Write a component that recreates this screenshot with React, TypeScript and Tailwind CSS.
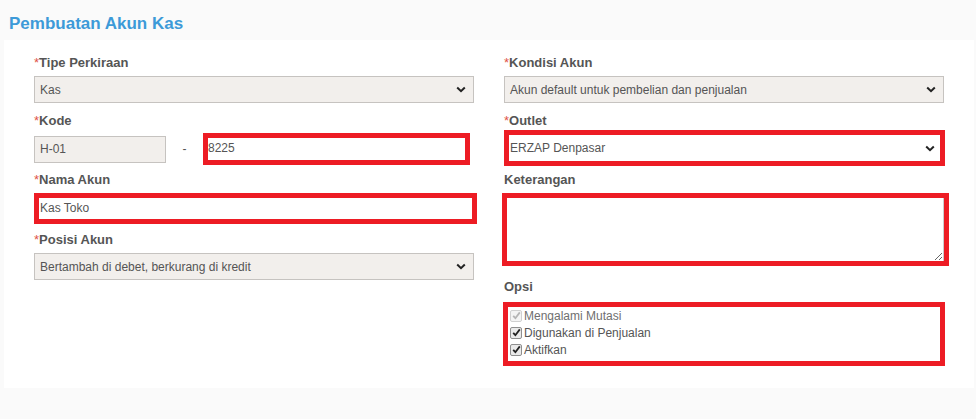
import type { ReactNode } from "react";

const font = { fontFamily: '"Liberation Sans", Arial, sans-serif' };

function Label({ children, required }: { children: ReactNode; required?: boolean }) {
  return (
    <div className="h-[18px] text-[13px] leading-[18px] font-bold text-[#555]">
      {required && <span className="font-normal text-[#e0534a]">*</span>}
      {children}
    </div>
  );
}

function Chevron() {
  return (
    <svg width="10" height="7" viewBox="0 0 10 7" className="shrink-0">
      <path d="M1.2 1.5 L5 5.2 L8.8 1.5" fill="none" stroke="#222" strokeWidth="2" />
    </svg>
  );
}

function Select({ value, className = "" }: { value: string; className?: string }) {
  return (
    <div
      className={`flex h-[27px] items-center justify-between border border-[#c6c3c0] bg-[#f2efec] pr-[7px] pl-[5px] text-[12px] text-[#555] ${className}`}
    >
      <span>{value}</span>
      <Chevron />
    </div>
  );
}

function Check({ label, disabled }: { label: string; disabled?: boolean }) {
  return (
    <div className="flex h-[17px] items-center gap-[2px] text-[12px] text-[#555]">
      <span
        className={`flex h-[12px] w-[12px] items-center justify-center rounded-[2px] border ${
          disabled ? "border-[#d0d0d0] bg-[#f4f4f4]" : "border-[#8f8f8f] bg-[#eaeaea]"
        }`}
      >
        <svg width="9" height="9" viewBox="0 0 9 9">
          <path
            d="M1.2 4.8 L3.4 7.2 L7.8 1.4"
            fill="none"
            stroke={disabled ? "#b5b5b5" : "#222"}
            strokeWidth="1.8"
          />
        </svg>
      </span>
      <span className={disabled ? "text-[#6f6f6f]" : ""}>{label}</span>
    </div>
  );
}

export default function App() {
  return (
    <div className="min-h-[419px] bg-[#fafafa]" style={font}>
      <h1 className="h-[40px] pt-[14px] pl-[9px] text-[17px] leading-[20px] font-bold text-[#3d9ad8]">
        Pembuatan Akun Kas
      </h1>

      <div className="mr-[2px] ml-[4px] grid h-[348px] grid-cols-[440px_440px] gap-x-[30px] bg-white pt-[14px] pl-[30px]">
        {/* left column */}
        <div className="flex flex-col">
          <Label required>Tipe Perkiraan</Label>
          <Select value="Kas" className="mt-[4px]" />

          <div className="mt-[9px]">
            <Label required>Kode</Label>
          </div>
          <div className="mt-[3px] flex h-[32px] items-center">
            <div className="flex h-[27px] w-[132px] items-center border border-[#c6c3c0] bg-[#f2efec] pl-[5px] text-[12px] text-[#555]">
              H-01
            </div>
            <div className="w-[37px] text-center text-[12px] text-[#555]">-</div>
            <div className="flex h-[32px] w-[267px] items-center border-[5px] border-[#ed1c24] bg-white pb-[2px] text-[12px] text-[#555]">
              8225
            </div>
          </div>

          <div className="mt-[6px]">
            <Label required>Nama Akun</Label>
          </div>
          <div className="mt-[4px] flex h-[31px] w-[443px] items-center border-[5px] border-[#ed1c24] bg-white pb-[1px] pl-[1px] text-[12px] text-[#555]">
            Kas Toko
          </div>

          <div className="mt-[7px]">
            <Label required>Posisi Akun</Label>
          </div>
          <Select value="Bertambah di debet, berkurang di kredit" className="mt-[4px]" />
        </div>

        {/* right column */}
        <div className="flex flex-col">
          <Label required>Kondisi Akun</Label>
          <Select value="Akun default untuk pembelian dan penjualan" className="mt-[4px]" />

          <div className="mt-[9px]">
            <Label required>Outlet</Label>
          </div>
          <div className="flex h-[36px] w-[441px] items-center justify-between border-[5px] border-[#ed1c24] bg-white pr-[5px] pl-[1px] text-[12px] text-[#555]">
            <span>ERZAP Denpasar</span>
            <Chevron />
          </div>

          <div className="mt-[5px]">
            <Label>Keterangan</Label>
          </div>
          <div className="mt-[4px] -ml-[2px] h-[73px] w-[447px] border-[5px] border-[#ed1c24] bg-white">
            <textarea className="block h-full w-full resize-y border-r border-[#ccc] text-[12px] text-[#555] outline-none" />
          </div>

          <div className="mt-[12px]">
            <Label>Opsi</Label>
          </div>
          <div className="mt-[6px] -ml-[1px] h-[64px] w-[442px] border-[5px] border-[#ed1c24] pl-[2px]">
            <Check label="Mengalami Mutasi" disabled />
            <Check label="Digunakan di Penjualan" />
            <Check label="Aktifkan" />
          </div>
        </div>
      </div>
    </div>
  );
}
